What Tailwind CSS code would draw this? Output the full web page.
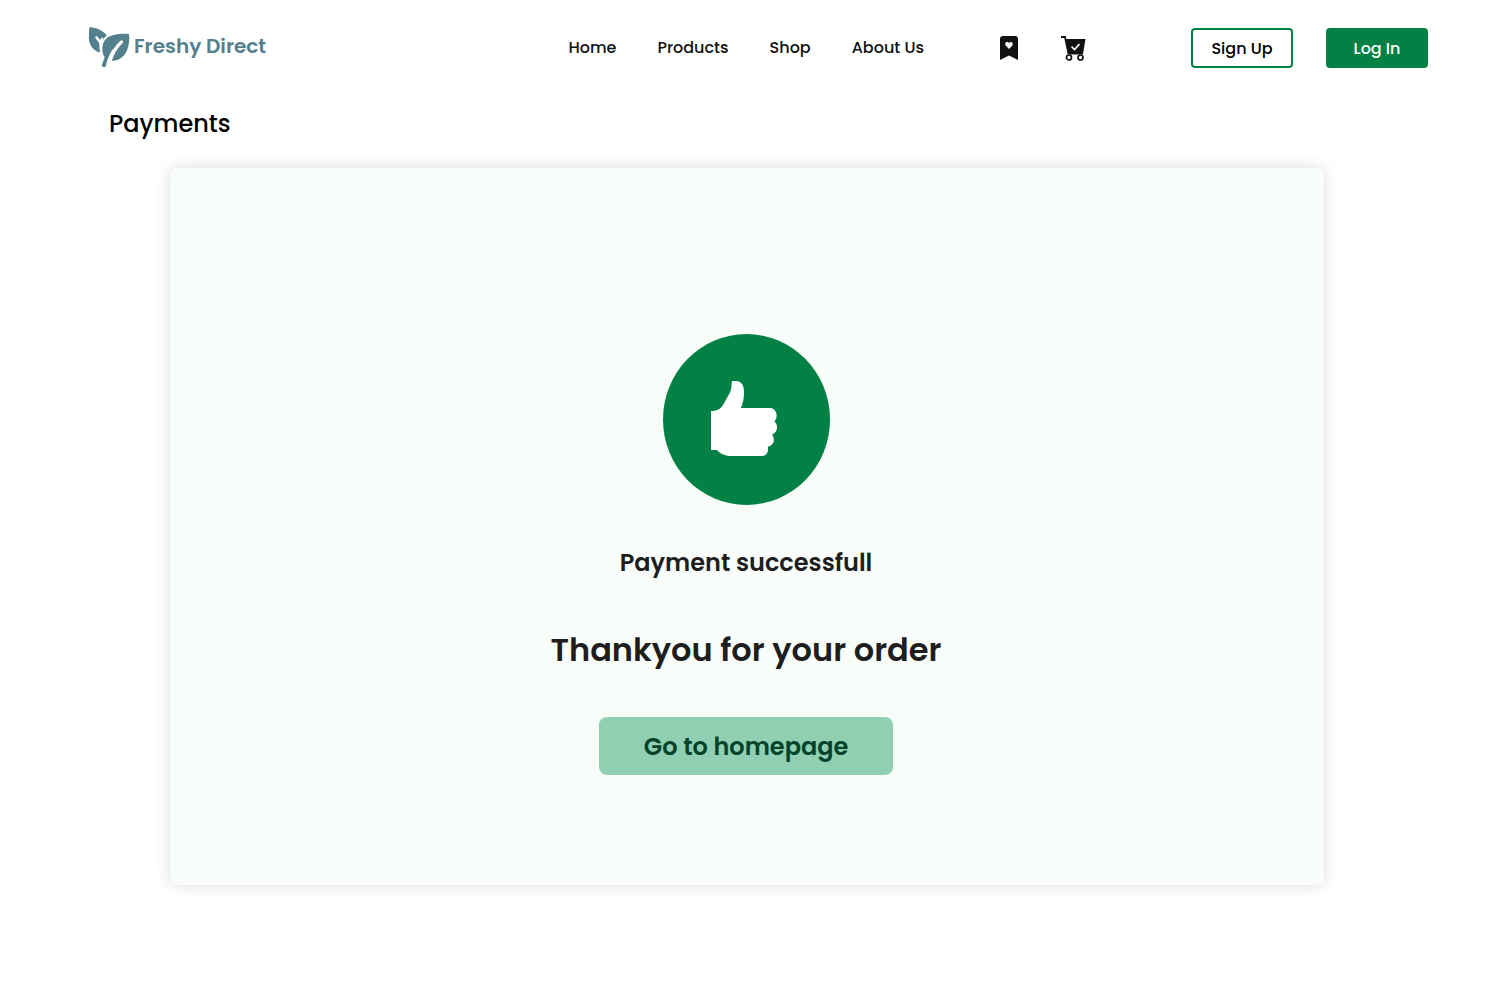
<!DOCTYPE html>
<html lang="en">
<head>
<meta charset="utf-8">
<meta name="viewport" content="width=device-width, initial-scale=1">
<title>Freshy Direct – Payments</title>
<script src="https://cdn.jsdelivr.net/npm/@tailwindcss/browser@4"></script>
</head>
<body class="min-h-screen bg-white font-['Poppins',Inter,sans-serif] text-black">
<header class="flex items-center pt-[27px] pr-[84px] pl-[88px]">
  <a href="#" class="flex items-center gap-1 text-xl font-semibold text-[#53808c]">
    <svg class="size-[42px]" viewBox="0 0 42 42" fill="none" aria-hidden="true">
      <path fill="#53808c" d="M1.500 0C9 1 15.500 3.500 18.800 8.500C15 11.500 13 15 13 19.500C13 22 12.500 24 11 25.500C4 23 0 16 1 8C1 4 1.200 2 1.500 0Z"/>
      <path fill="#53808c" d="M41 7C41.800 14 40.500 23 36 28.500C32 33 26.500 34.500 21 33.500L16.500 30C13 24 13.500 15.500 19 11C24.500 7 33 6.500 41 7Z"/>
      <path stroke="#fff" stroke-width="2.600" stroke-linecap="round" stroke-linejoin="round" d="M8.500 10.500L12.500 15.500L14 12M12.500 15.500L12.800 22"/>
      <path stroke="#fff" stroke-width="3.200" stroke-linecap="round" d="M33.500 15C28 19.500 25 25 22 34"/>
      <path fill="#53808c" d="M18 25L24.500 24C21.500 28 19.500 33 18 38.500C17.500 41 13 40.500 14 37.500L17.500 28Z"/>
      <path stroke="#fff" stroke-width="2.400" d="M25.500 23C23 27 21 31 19.500 37"/>
    </svg>
    <span class="pb-1">Freshy Direct</span>
  </a>
  <nav class="ml-auto flex gap-[41px] text-base font-medium text-[#111]">
    <a href="#">Home</a>
    <a href="#">Products</a>
    <a href="#">Shop</a>
    <a href="#">About Us</a>
  </nav>
  <div class="ml-[76px] flex items-center gap-[42px]">
    <a href="#" aria-label="Saved items">
      <svg class="h-6 w-[19px]" viewBox="0 0 19 24" aria-hidden="true">
        <path fill="#111" d="M0 24V3Q0 0 3 0H15Q18 0 18 3V24L9 19.500Z"/>
        <path fill="#fff" d="M9 13L5.900 9.800C3.700 7.300 7 4.500 9 7C11 4.500 14.300 7.300 12.100 9.800Z"/>
      </svg>
    </a>
    <a href="#" aria-label="Cart">
      <svg class="h-[26px] w-[25px]" viewBox="0 0 25 26" fill="none" aria-hidden="true">
        <path stroke="#111" stroke-width="1.800" d="M0 2H4L7.500 18.500H21.500"/>
        <path fill="#111" d="M4.500 4H24.500L22 19H7.500Z"/>
        <path stroke="#fff" stroke-width="1.600" d="M10.500 11.500L13.500 14.500L18.500 9"/>
        <circle cx="8" cy="22.500" r="2.500" fill="#fff" stroke="#111" stroke-width="1.700"/>
        <circle cx="19.500" cy="22.500" r="2.500" fill="#fff" stroke="#111" stroke-width="1.700"/>
      </svg>
    </a>
  </div>
  <div class="ml-[105px] flex gap-[33px] text-base font-medium">
    <button type="button" class="h-10 w-[102px] rounded border-2 border-[#038144] bg-white pt-0.5">Sign Up</button>
    <button type="button" class="h-10 w-[102px] rounded bg-[#038144] pt-0.5 text-white">Log In</button>
  </div>
</header>
<main class="pr-[188px] pb-12 pl-[170px]">
  <h1 class="-ml-[61px] pt-[37px] text-2xl leading-9 font-medium">Payments</h1>
  <section class="mt-[26px] flex flex-col items-center rounded-lg bg-[#f8fdfa] pt-[166px] pr-0.5 pb-[110px] text-[#1e1e1e] shadow-[0_0_16px_rgba(0,0,0,0.14)]">
    <svg class="h-[171px] w-[167px]" viewBox="0 0 167 171" role="img" aria-label="Thumbs up">
      <ellipse cx="83.500" cy="85.500" rx="83.500" ry="85.500" fill="#038144"/>
      <path fill="#fff" d="M48 77H51C56 76 58 74 60 71L67 58.500C69 54.500 68 51 69 47H73C79 47 81 52 81 58C81 64 80 69 78 74H107C113 74 116 82 111.500 87.500C115.500 91 115 98 109 100.500C113 106 110 112 105 112.500V115C105 119 103 122 99 122H68C62 122 57 119.500 54 116H48Z"/>
    </svg>
    <p class="mt-10 text-2xl leading-9 font-semibold">Payment successfull</p>
    <h2 class="mt-11 text-[32px] leading-[50px] font-semibold">Thankyou for your order</h2>
    <button type="button" class="mt-[42px] h-[58px] w-[294px] rounded-lg bg-[#90cfb2] pt-0.5 text-2xl font-semibold text-[#02432a]">Go to homepage</button>
  </section>
</main>
</body>
</html>
